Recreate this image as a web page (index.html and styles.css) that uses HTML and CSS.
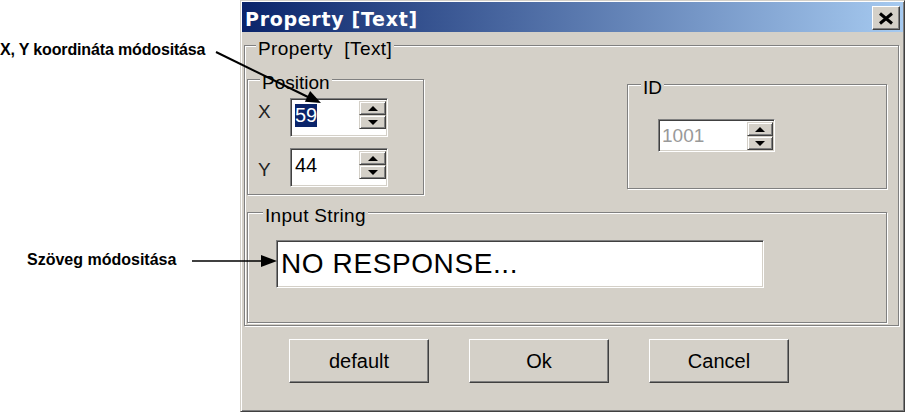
FILE: index.html
```html
<!DOCTYPE html>
<html lang="hu">
<head>
    <meta charset="UTF-8">
    <meta name="viewport" content="width=device-width, initial-scale=1.0">
    <title>Property [Text]</title>
    <link rel="stylesheet" href="styles.css">
</head>
<body>
<div class="page">
    <!-- megjegyzesek -->
    <div class="note note-xy">X, Y koordináta módositása</div>
    <div class="note note-text">Szöveg módositása</div>
    <svg class="arrows" width="905" height="414" viewBox="0 0 905 414">
        <line x1="216" y1="52" x2="308" y2="97" stroke="#000" stroke-width="2"/>
        <polygon points="321,103 304.9,101.8 310.1,91" fill="#000"/>
        <line x1="192" y1="261" x2="264" y2="261" stroke="#000" stroke-width="1.5"/>
        <polygon points="277,261 261,255 261,267" fill="#000"/>
    </svg>

    <div class="window">
        <div class="titlebar">
            <span class="title">Property [Text]</span>
            <button class="close" type="button">
                <svg width="16" height="13" viewBox="0 0 16 13">
                    <path d="M2 1.5 L14 11.5 M14 1.5 L2 11.5" stroke="#000" stroke-width="3" fill="none"/>
                </svg>
            </button>
        </div>

        <div class="client">
            <div class="group group-main">
                <div class="group-label label-main">Property&nbsp; [Text]</div>

                <div class="top-row">
                    <div class="group group-pos">
                        <div class="group-label label-pos">Position</div>
                        <div class="pos-row row-x">
                            <span class="axis axis-x">X</span>
                            <div class="field field-pos">
                                <div class="field-value"><span class="value selected">59</span></div>
                                <div class="spin">
                                    <div class="spin-btn up"></div>
                                    <div class="spin-btn down"></div>
                                </div>
                            </div>
                        </div>
                        <div class="pos-row row-y">
                            <span class="axis axis-y">Y</span>
                            <div class="field field-pos">
                                <div class="field-value"><span class="value">44</span></div>
                                <div class="spin">
                                    <div class="spin-btn up"></div>
                                    <div class="spin-btn down"></div>
                                </div>
                            </div>
                        </div>
                    </div>

                    <div class="group group-id">
                        <div class="group-label label-id">ID</div>
                        <div class="field field-id">
                            <div class="field-value disabled"><span class="value">1001</span></div>
                            <div class="spin spin-id">
                                <div class="spin-btn up"></div>
                                <div class="spin-btn down"></div>
                            </div>
                        </div>
                    </div>
                </div>

                <div class="group group-input">
                    <div class="group-label label-input">Input String</div>
                    <div class="field field-text">NO RESPONSE...</div>
                </div>
            </div>

            <div class="buttons">
                <button class="btn" type="button">default</button>
                <button class="btn" type="button">Ok</button>
                <button class="btn" type="button">Cancel</button>
            </div>
        </div>
    </div>
</div>
</body>
</html>
```

FILE: styles.css
```css
body {
    margin: 0;
    background: #fff;
    font-family: "Liberation Sans", Arial, sans-serif;
    color: #000;
}

.page {
    position: relative;
    width: 905px;
    height: 414px;
    overflow: hidden;
}

/* megjegyzesek + nyilak */
.note {
    position: absolute;
    font-size: 16px;
    font-weight: bold;
    line-height: 20px;
    white-space: nowrap;
}

.note-xy {
    left: 0;
    top: 40px;
    letter-spacing: -0.15px;
}

.note-text {
    left: 27px;
    top: 250px;
}

.arrows {
    position: absolute;
    left: 0;
    top: 0;
    z-index: 2;
    pointer-events: none;
}

/* ablak */
.window {
    margin-left: 240px;
    width: 665px;
    height: 412px;
    box-sizing: border-box;
    padding: 1px;
    background: #d4d0c8;
    border: 1px solid;
    border-color: #d4d0c8 #404040 #404040 #d4d0c8;
    box-shadow: inset 1px 1px 0 #fff, inset -1px -1px 0 #808080;
}

.titlebar {
    height: 30px;
    display: flex;
    align-items: flex-start;
    background: linear-gradient(to right, #0a246a, #a6caf0);
}

.title {
    flex: 1;
    padding: 4px 0 0 3px;
    font-family: "DejaVu Sans", sans-serif;
    font-weight: bold;
    font-size: 19px;
    line-height: 26px;
    letter-spacing: 0.7px;
    color: #fff;
}

.close {
    width: 28px;
    height: 24px;
    margin: 4px 3px 0 0;
    padding: 0;
    display: flex;
    align-items: center;
    justify-content: center;
    background: #d4d0c8;
    border: 1px solid;
    border-color: #fff #404040 #404040 #fff;
    box-shadow: inset -1px -1px 0 #808080;
}

.client {
    padding: 13px 0 0 2px;
}

/* csoportok */
.group {
    box-sizing: border-box;
    border: 1px solid #808080;
    box-shadow: inset 1px 1px 0 #fff, 1px 1px 0 #fff;
}

.group-label {
    width: fit-content;
    margin-top: -7px;
    padding: 0 2px;
    background: #d4d0c8;
    font-size: 19px;
    line-height: 20px;
    white-space: nowrap;
}

.group-main {
    width: 655px;
    padding: 0 11px 2px 2px;
}

.label-main {
    margin-left: 9px;
    letter-spacing: 0.4px;
}

.top-row {
    display: flex;
    justify-content: space-between;
    align-items: flex-start;
}

.group-pos {
    width: 177px;
    margin-top: 20px;
    padding-bottom: 7px;
}

.label-pos {
    margin-left: 12px;
}

.pos-row {
    display: flex;
    align-items: flex-start;
    padding-left: 10px;
}

.row-x {
    margin-top: 5px;
}

.row-y {
    margin-top: 11px;
}

.axis {
    width: 32px;
    font-size: 19px;
    line-height: 20px;
    color: #222;
}

.axis-x {
    margin-top: 4px;
}

.axis-y {
    margin-top: 12px;
}

.group-id {
    width: 260px;
    margin-top: 25px;
    padding-bottom: 36px;
}

.label-id {
    margin-left: 13px;
}

.group-input {
    margin-top: 17px;
    padding-bottom: 34px;
}

.label-input {
    margin-left: 15px;
    letter-spacing: 0.3px;
}

/* beviteli mezok */
.field {
    box-sizing: border-box;
    display: flex;
    align-items: flex-start;
    padding: 1px;
    background: #fff;
    border: 1px solid;
    border-color: #808080 #fff #fff #808080;
    box-shadow: inset 1px 1px 0 #404040, inset -1px -1px 0 #d4d0c8;
}

.field-pos {
    width: 98px;
    height: 39px;
}

.field-id {
    width: 117px;
    height: 33px;
    margin: 21px 0 0 30px;
}

.field-value {
    flex: 1;
    padding: 4px 0 0 3px;
    font-size: 20px;
}

.value {
    display: inline-block;
    height: 23px;
    line-height: 23px;
}

.selected {
    background: #0a246a;
    color: #fff;
}

.field-value.disabled {
    padding: 3px 0 0 2px;
    font-size: 19px;
    color: #999;
}

.field-text {
    width: 488px;
    height: 48px;
    margin: 14px 0 0 28px;
    padding-left: 4px;
    font-size: 28px;
    line-height: 44px;
    letter-spacing: 0.6px;
}

/* spin gombok */
.spin {
    width: 27px;
    margin-top: 1px;
    display: flex;
    flex-direction: column;
}

.spin-id {
    width: 26px;
}

.spin-btn {
    height: 14px;
    box-sizing: border-box;
    display: flex;
    align-items: center;
    justify-content: center;
    background: #d4d0c8;
    border: 1px solid;
    border-color: #d4d0c8 #404040 #404040 #d4d0c8;
    box-shadow: inset 1px 1px 0 #fff, inset -1px -1px 0 #808080;
}

.spin-btn::after {
    content: "";
    border-left: 5px solid transparent;
    border-right: 5px solid transparent;
}

.spin-btn.up::after {
    border-bottom: 5px solid #000;
}

.spin-btn.down::after {
    border-top: 5px solid #000;
}

/* gombok */
.buttons {
    display: flex;
    gap: 40px;
    margin-top: 13px;
    padding-left: 45px;
}

.btn {
    width: 140px;
    height: 44px;
    padding: 0;
    background: #d4d0c8;
    border: 1px solid;
    border-color: #fff #404040 #404040 #fff;
    box-shadow: inset -1px -1px 0 #808080;
    font-family: "Liberation Sans", Arial, sans-serif;
    font-size: 20px;
    color: #000;
}
```
